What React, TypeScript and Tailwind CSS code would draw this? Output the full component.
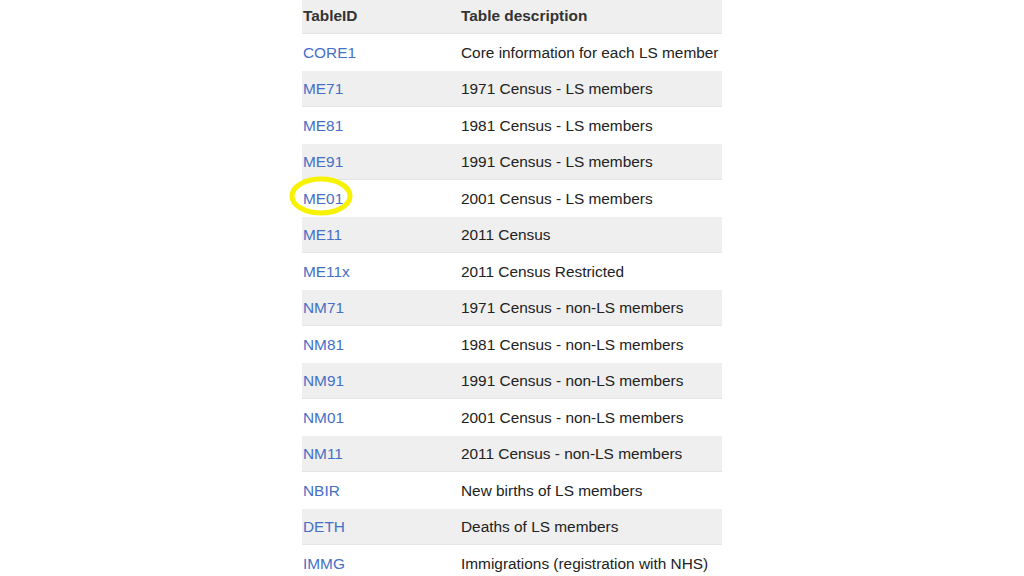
import React from "react";

const rows = [
  ["CORE1", "Core information for each LS member"],
  ["ME71", "1971 Census - LS members"],
  ["ME81", "1981 Census - LS members"],
  ["ME91", "1991 Census - LS members"],
  ["ME01", "2001 Census - LS members"],
  ["ME11", "2011 Census"],
  ["ME11x", "2011 Census Restricted"],
  ["NM71", "1971 Census - non-LS members"],
  ["NM81", "1981 Census - non-LS members"],
  ["NM91", "1991 Census - non-LS members"],
  ["NM01", "2001 Census - non-LS members"],
  ["NM11", "2011 Census - non-LS members"],
  ["NBIR", "New births of LS members"],
  ["DETH", "Deaths of LS members"],
  ["IMMG", "Immigrations (registration with NHS)"],
];

const App = () => {
  return (
    <div
      className="w-[1024px] h-[576px] overflow-hidden bg-white text-[15.4px] text-[#222]"
      style={{ fontFamily: '"Liberation Sans", Arial, sans-serif' }}
    >
      <div className="mx-auto w-[420px] -mt-[2.5px]">
        <div className="grid grid-cols-[159px_1fr] h-[36.5px] items-center bg-[#efefef] border-b border-[#e4e4e4] font-bold text-[#333]">
          <div className="pl-px">TableID</div>
          <div>Table description</div>
        </div>
        {rows.map(([id, desc], i) => (
          <div
            key={id}
            className={
              i % 2 === 1
                ? "grid grid-cols-[159px_1fr] h-[36.5px] items-center bg-[#efefef] border-b border-[#e4e4e4]"
                : "grid grid-cols-[159px_1fr] h-[36.5px] items-center bg-white"
            }
          >
            <div className="relative pl-px text-[#4470c8]">
              {id}
              {id === "ME01" && (
                <svg
                  className="absolute -left-[13px] -top-[11px]"
                  width="64"
                  height="40"
                  viewBox="0 0 64 40"
                >
                  <ellipse
                    cx="32"
                    cy="20"
                    rx="29"
                    ry="17"
                    fill="none"
                    stroke="#f7f200"
                    strokeWidth="5"
                  />
                </svg>
              )}
            </div>
            <div>{desc}</div>
          </div>
        ))}
      </div>
    </div>
  );
};

export default App;
